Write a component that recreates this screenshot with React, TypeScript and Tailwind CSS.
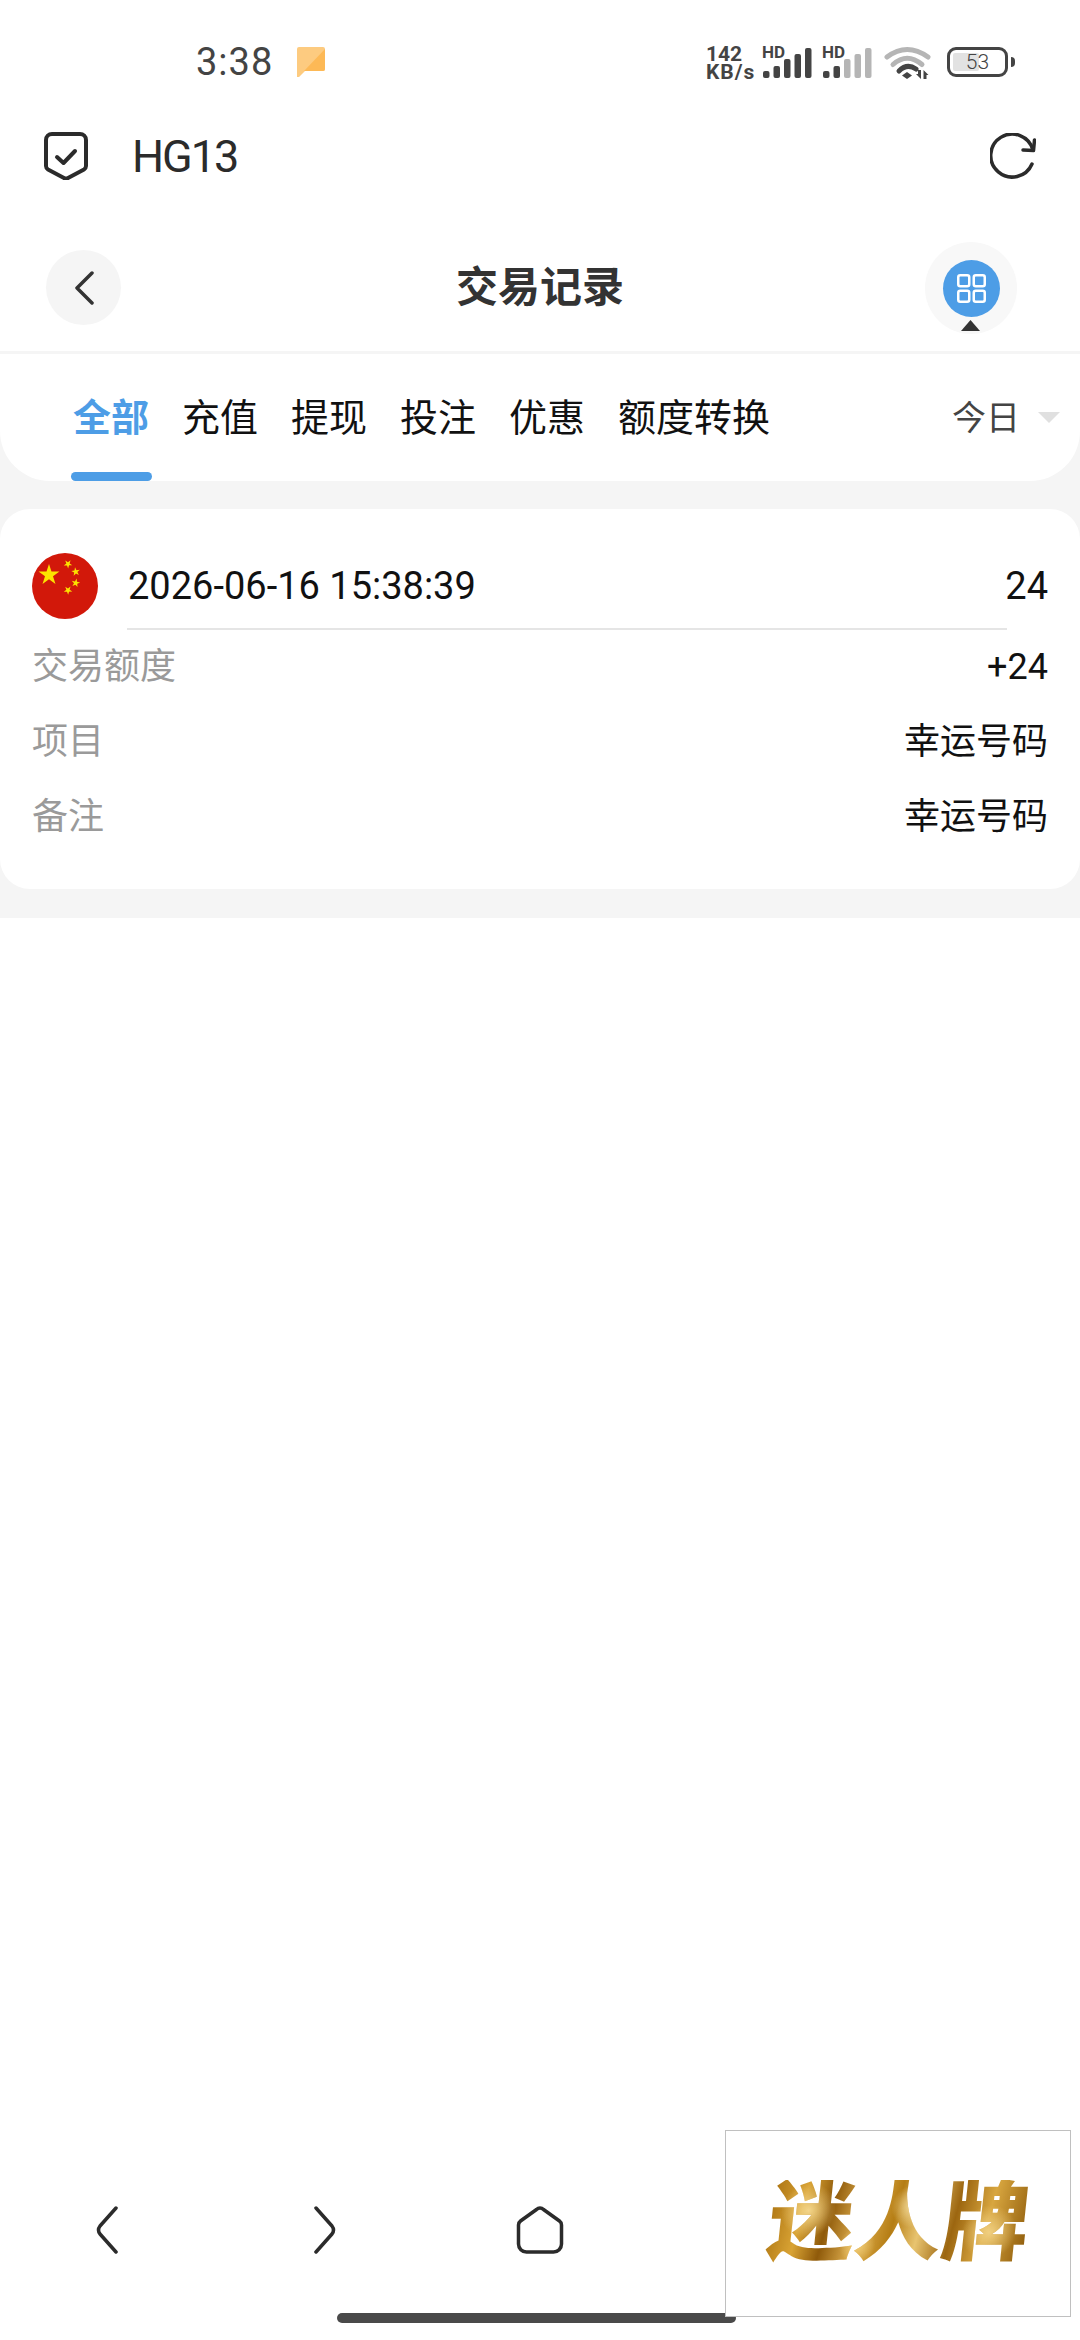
const tabs = ["充值", "提现", "投注", "优惠", "额度转换"];

const rows = [
  { label: "交易额度", value: "+24" },
  { label: "项目", value: "幸运号码" },
  { label: "备注", value: "幸运号码" },
];

// five-point star as svg points, used by the flag
function star(cx: number, cy: number, r: number, turn = 0) {
  const pts: string[] = [];
  for (let i = 0; i < 10; i++) {
    const radius = i % 2 === 0 ? r : r * 0.382;
    const a = -Math.PI / 2 + turn + (i * Math.PI) / 5;
    pts.push(`${(cx + radius * Math.cos(a)).toFixed(2)},${(cy + radius * Math.sin(a)).toFixed(2)}`);
  }
  return pts.join(" ");
}

function SignalBars({ lit }: { lit: number }) {
  const heights = [7, 12, 19, 24, 30];
  return (
    <svg width="50" height="31" viewBox="0 0 50 31" className="block">
      {heights.map((h, i) => (
        <rect
          key={h}
          x={1 + i * 10.5}
          y={31 - h}
          width="6.5"
          height={h}
          rx="2"
          fill={i < lit ? "#444444" : "#b5b5b5"}
        />
      ))}
    </svg>
  );
}

function Signal({ lit }: { lit: number }) {
  return (
    <div className="relative h-[31px] w-[50px]">
      <span className="absolute -top-[2px] left-0 text-[17px] leading-[14px] font-bold text-[#444444]">HD</span>
      <SignalBars lit={lit} />
    </div>
  );
}

function StatusBar() {
  return (
    <div className="flex h-[124px] items-center pr-[65px] pl-[196px]">
      <span className="text-[38px] leading-none tracking-[1px] text-[#444444]">3:38</span>
      <svg className="ml-[24px]" width="28" height="30" viewBox="0 0 28 30">
        <path d="M2 0h24a2 2 0 0 1 2 2v20a2 2 0 0 1-2 2H8l-6 6a1 1 0 0 1-2-1V2a2 2 0 0 1 2-2z" fill="#fdcb80" />
        <path d="M28 2v20a2 2 0 0 1-2 2H7z" fill="#fdb956" />
      </svg>
      <div className="ml-auto flex items-center">
        <div className="mt-[2px] flex w-[48px] flex-col text-[21px] leading-[18px] font-bold text-[#444444]">
          <span>142</span>
          <span className="whitespace-nowrap tracking-[1px]">KB/s</span>
        </div>
        <div className="ml-[8px]">
          <Signal lit={5} />
        </div>
        <div className="ml-[10px]">
          <Signal lit={2} />
        </div>
        <svg className="ml-[12px]" width="47" height="33" viewBox="0 0 47 33" fill="none">
          <path d="M3 11Q23 -4 44 11" stroke="#b5b5b5" strokeWidth="5" strokeLinecap="round" />
          <path d="M9 18.500Q23 6 38 18.500" stroke="#b5b5b5" strokeWidth="5" strokeLinecap="round" />
          <path d="M15 25Q23 17 32 23" stroke="#444444" strokeWidth="5" strokeLinecap="round" />
          <path d="M23 26l5 3.500-5 3.500-5-3.500z" fill="#444444" />
          <path d="M37 24v9l-5-5h2v-4zM39.500 33v-9l5 5h-2v4z" fill="#444444" />
        </svg>
        <div className="relative ml-[16px] flex h-[30px] w-[61px] items-center justify-center rounded-[9px] border-[3px] border-[#444444]">
          <div className="absolute top-[3px] bottom-[3px] left-[3px] w-[26px] rounded-[2px] bg-[#e2e2e2]" />
          <span className="relative text-[21px] leading-none font-light text-[#444444]">53</span>
        </div>
        <div className="ml-[3px] h-[10px] w-[4px] rounded-r-full bg-[#444444]" />
      </div>
    </div>
  );
}

function AppBar() {
  return (
    <div className="flex h-[64px] items-center justify-between pr-[44px] pl-[44px]">
      <div className="flex items-center gap-[44px]">
        <svg width="44" height="48" viewBox="0 0 44 48" fill="none" stroke="#2b2b2b" strokeWidth="4" strokeLinecap="round" strokeLinejoin="round">
          <path d="M8 2h28a6 6 0 0 1 6 6v26a4 4 0 0 1-2 3.400L24 46a4 4 0 0 1-4 0L4 37.400A4 4 0 0 1 2 34V8a6 6 0 0 1 6-6z" />
          <path d="M13 25l6.500 6L31 19" />
        </svg>
        <span className="text-[45px] leading-none tracking-[-2px] text-[#2b2b2b]">HG13</span>
      </div>
      <svg width="46" height="46" viewBox="0 0 46 46" fill="none" stroke="#2b2b2b" strokeWidth="3.500" strokeLinecap="round" strokeLinejoin="round">
        <path d="M43 17A21.500 21.500 0 1 0 42 31" />
        <path d="M44.500 7L43.500 17.500L33 17" />
      </svg>
    </div>
  );
}

function NavBar() {
  return (
    <div className="relative flex h-[163px] items-start justify-between pr-[63px] pl-[46px]">
      <div className="mt-[62px] flex h-[75px] w-[75px] items-center justify-center rounded-full bg-[#f5f5f5]">
        <svg width="20" height="34" viewBox="0 0 20 34" fill="none" stroke="#333333" strokeWidth="3.500" strokeLinecap="round" strokeLinejoin="round">
          <path d="M18 2L3 17l15 15" />
        </svg>
      </div>
      <span className="absolute top-[76px] left-0 w-full text-center text-[42px] leading-[48px] font-bold text-[#333333]">交易记录</span>
      <div className="relative mt-[54px] flex h-[92px] w-[92px] items-center justify-center rounded-full bg-[#f8f8f8]">
        <div className="flex h-[57px] w-[57px] items-center justify-center rounded-full bg-[#4d9de6]">
          <svg width="29" height="29" viewBox="0 0 29 29" fill="none" stroke="#ffffff" strokeWidth="2.500">
            <rect x="1.250" y="1.250" width="11" height="11" rx="2" />
            <rect x="16.750" y="1.250" width="11" height="11" rx="2" />
            <rect x="1.250" y="16.750" width="11" height="11" rx="2" />
            <rect x="16.750" y="16.750" width="11" height="11" rx="2" />
          </svg>
        </div>
        <svg className="absolute top-[78px] left-[36px]" width="19" height="11" viewBox="0 0 19 11">
          <path d="M9.500 0L19 11H0z" fill="#333333" />
        </svg>
      </div>
    </div>
  );
}

function TabBar() {
  return (
    <div className="bg-[#f5f5f5]">
      <div className="flex h-[127px] items-start rounded-b-[50px] bg-white pt-[45px] pr-[20px] pl-[73px]">
        <div className="relative">
          <span className="block text-[38px] leading-[38px] font-bold text-[#4d9de6]">全部</span>
          <div className="absolute top-[73px] -left-[2px] h-[9px] w-[81px] rounded-full bg-[#4d9de6]" />
        </div>
        {tabs.map((tab) => (
          <span key={tab} className="ml-[33px] text-[38px] leading-[38px] text-[#111111]">
            {tab}
          </span>
        ))}
        <span className="ml-auto text-[34px] leading-[38px] text-[#444444]">今日</span>
        <svg className="mt-[13px] ml-[18px]" width="22" height="11" viewBox="0 0 22 11">
          <path d="M0 0h22L11 11z" fill="#e0e0e0" />
        </svg>
      </div>
    </div>
  );
}

function FlagIcon() {
  return (
    <svg width="66" height="66" viewBox="0 0 66 66" className="shrink-0">
      <circle cx="33" cy="33" r="33" fill="#d2180a" />
      <g fill="#fce300">
        <polygon points={star(17, 22, 11)} />
        <polygon points={star(36, 11, 4.500, 0.6)} />
        <polygon points={star(43.700, 18.700, 4.500, 1.1)} />
        <polygon points={star(43.700, 30, 4.500, 0.2)} />
        <polygon points={star(36, 37.300, 4.500, 0.6)} />
      </g>
    </svg>
  );
}

function RecordCard() {
  return (
    <div className="bg-[#f5f5f5] pt-[28px] pb-[29px]">
      <div className="h-[380px] rounded-[30px] bg-white pt-[44px] pr-[32px] pl-[32px]">
        <div className="flex items-center">
          <FlagIcon />
          <span className="ml-[30px] text-[38px] leading-none text-[#111111]">2026-06-16 15:38:39</span>
          <span className="ml-auto text-[38px] leading-none text-[#111111]">24</span>
        </div>
        <div className="mt-[9px] mr-[41px] ml-[95px] h-[2px] bg-[#e5e5e5]" />
        <div className="mt-[18px] flex flex-col gap-[37px]">
          {rows.map((row) => (
            <div key={row.label} className="flex h-[38px] items-center justify-between">
              <span className="text-[36px] leading-none text-[#9a9a9a]">{row.label}</span>
              <span className="text-[36px] leading-none text-[#111111]">{row.value}</span>
            </div>
          ))}
        </div>
      </div>
    </div>
  );
}

function BrowserBar() {
  return (
    <div className="flex flex-1 flex-col justify-end">
      <div className="relative flex h-[134px] items-start pl-[96px]">
        <svg width="22" height="48" viewBox="0 0 22 48" fill="none" stroke="#2b2b2b" strokeWidth="3.500" strokeLinecap="round" strokeLinejoin="round">
          <path d="M20 2L4 20Q1 24 4 28L20 46" />
        </svg>
        <svg className="ml-[196px]" width="22" height="48" viewBox="0 0 22 48" fill="none" stroke="#2b2b2b" strokeWidth="3.500" strokeLinecap="round" strokeLinejoin="round">
          <path d="M2 2L18 20Q21 24 18 28L2 46" />
        </svg>
        <svg className="ml-[180px]" width="48" height="48" viewBox="0 0 48 48" fill="none" stroke="#2b2b2b" strokeWidth="3.500" strokeLinecap="round" strokeLinejoin="round">
          <path d="M20.500 3.500a5 5 0 0 1 7 0L43.500 15a5 5 0 0 1 2 4v19a8 8 0 0 1-8 8h-27a8 8 0 0 1-8-8V19a5 5 0 0 1 2-4z" />
        </svg>
        <div className="absolute top-[107px] left-[337px] h-[10px] w-[399px] rounded-full bg-[#4a4a4a]" />
        {/* watermark box sits over the home indicator */}
        <div className="absolute top-[-76px] left-[725px] flex h-[187px] w-[346px] items-center justify-center border border-[#c0c0c0] bg-white">
          <span className="-skew-x-6 bg-[radial-gradient(circle_at_15%_35%,#f3d58a_0%,transparent_12%),radial-gradient(circle_at_55%_30%,#f4dc9c_0%,transparent_14%),radial-gradient(circle_at_85%_60%,#f0cf80_0%,transparent_12%),radial-gradient(circle_at_35%_75%,#f0cd78_0%,transparent_10%),linear-gradient(100deg,#a8700f_0%,#d9a334_14%,#8f5a0a_24%,#e0b050_36%,#b57d14_48%,#e8c470_58%,#9c6610_70%,#d8a63f_82%,#8a5708_100%)] bg-clip-text text-[87px] leading-none font-black text-transparent">
            迷人牌
          </span>
        </div>
      </div>
    </div>
  );
}

export default function App() {
  return (
    <div className="flex h-[2340px] w-[1080px] flex-col overflow-hidden bg-white font-['Roboto','Noto_Sans_CJK_SC',sans-serif]">
      <StatusBar />
      <AppBar />
      <NavBar />
      <div className="h-[3px] bg-[#f5f5f5]" />
      <TabBar />
      <RecordCard />
      <BrowserBar />
    </div>
  );
}
